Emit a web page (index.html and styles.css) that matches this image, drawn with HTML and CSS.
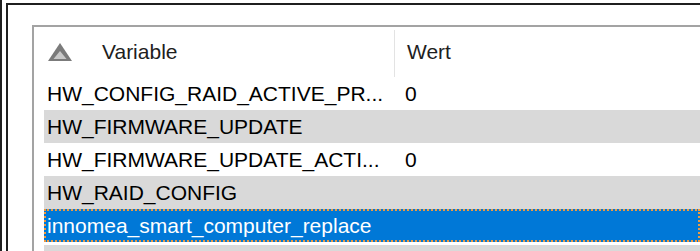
FILE: index.html
```html
<!DOCTYPE html>
<html>
  <head>
  <link rel="stylesheet" href="styles.css">
  </head>
  <body>
    <div class="frame">
      <div class="panel">
        <div class="list">
          <div class="head">
            <div class="headName">
              <svg class="sortIcon" width="24" height="18" viewBox="0 0 24 18">
                <polygon points="12,0 24,18 0,18" fill="#7b7b7b"/>
                <polygon points="12,8 18.5,16 5.5,16" fill="#c9c9c9"/>
              </svg>
              <span class="headLabel">Variable</span>
            </div>
            <div class="headValue">Wert</div>
          </div>
          <div class="row">
            <div class="name">HW_CONFIG_RAID_ACTIVE_PR...</div>
            <div class="value">0</div>
          </div>
          <div class="row alt">
            <div class="name">HW_FIRMWARE_UPDATE</div>
            <div class="value"></div>
          </div>
          <div class="row">
            <div class="name">HW_FIRMWARE_UPDATE_ACTI...</div>
            <div class="value">0</div>
          </div>
          <div class="row alt">
            <div class="name">HW_RAID_CONFIG</div>
            <div class="value"></div>
          </div>
          <div class="row selected">
            <div class="name">innomea_smart_computer_replace</div>
            <div class="value"></div>
          </div>
          <div class="row alt last">
            <div class="name"></div>
            <div class="value"></div>
          </div>
        </div>
      </div>
    </div>
  </body>
</html>
```

FILE: styles.css
```css
body {
  margin: 0;
  background-color: #ffffff;
  overflow: hidden;
  font-family: "Liberation Sans", Arial, sans-serif;
  font-size: 21px;
  color: #000000;
}

.frame {
  height: 251px;
  box-sizing: border-box;
  border-left: 2px solid #1f1f1f;
  padding-left: 4px;
  overflow: hidden;
}

.panel {
  margin-top: 3px;
  height: 248px;
  box-sizing: border-box;
  border-left: 2px solid #1f1f1f;
  border-top: 2px solid #1f1f1f;
  padding: 20px 0 0 24px;
}

.list {
  height: 100%;
  box-sizing: border-box;
  border-left: 2px solid #a3a3a3;
  border-top: 2px solid #a3a3a3;
  padding-left: 10px;
  overflow: hidden;
}

.head {
  display: flex;
  height: 50px;
  color: #1e1e1e;
}

.headName {
  width: 350px;
  display: flex;
  align-items: center;
}

.sortIcon {
  margin-left: 4px;
}

.headLabel {
  margin-left: 30px;
}

.headValue {
  margin-top: 3px;
  display: flex;
  align-items: center;
  border-left: 1px solid #e3e3e3;
  padding-left: 12px;
  padding-bottom: 3px;
}

.row {
  display: flex;
  align-items: center;
  height: 33px;
  box-sizing: border-box;
}

.name {
  width: 350px;
  box-sizing: border-box;
  padding-left: 3px;
  white-space: nowrap;
  overflow: hidden;
}

.value {
  padding-left: 11px;
}

.alt {
  background-color: #d9d9d9;
}

.selected {
  background-color: #0078d7;
  color: #ffffff;
  border: 2px dotted #f09a3e;
}

.selected .name {
  width: 348px;
  padding-left: 1px;
}

.last {
  margin-top: 3px;
}
```
